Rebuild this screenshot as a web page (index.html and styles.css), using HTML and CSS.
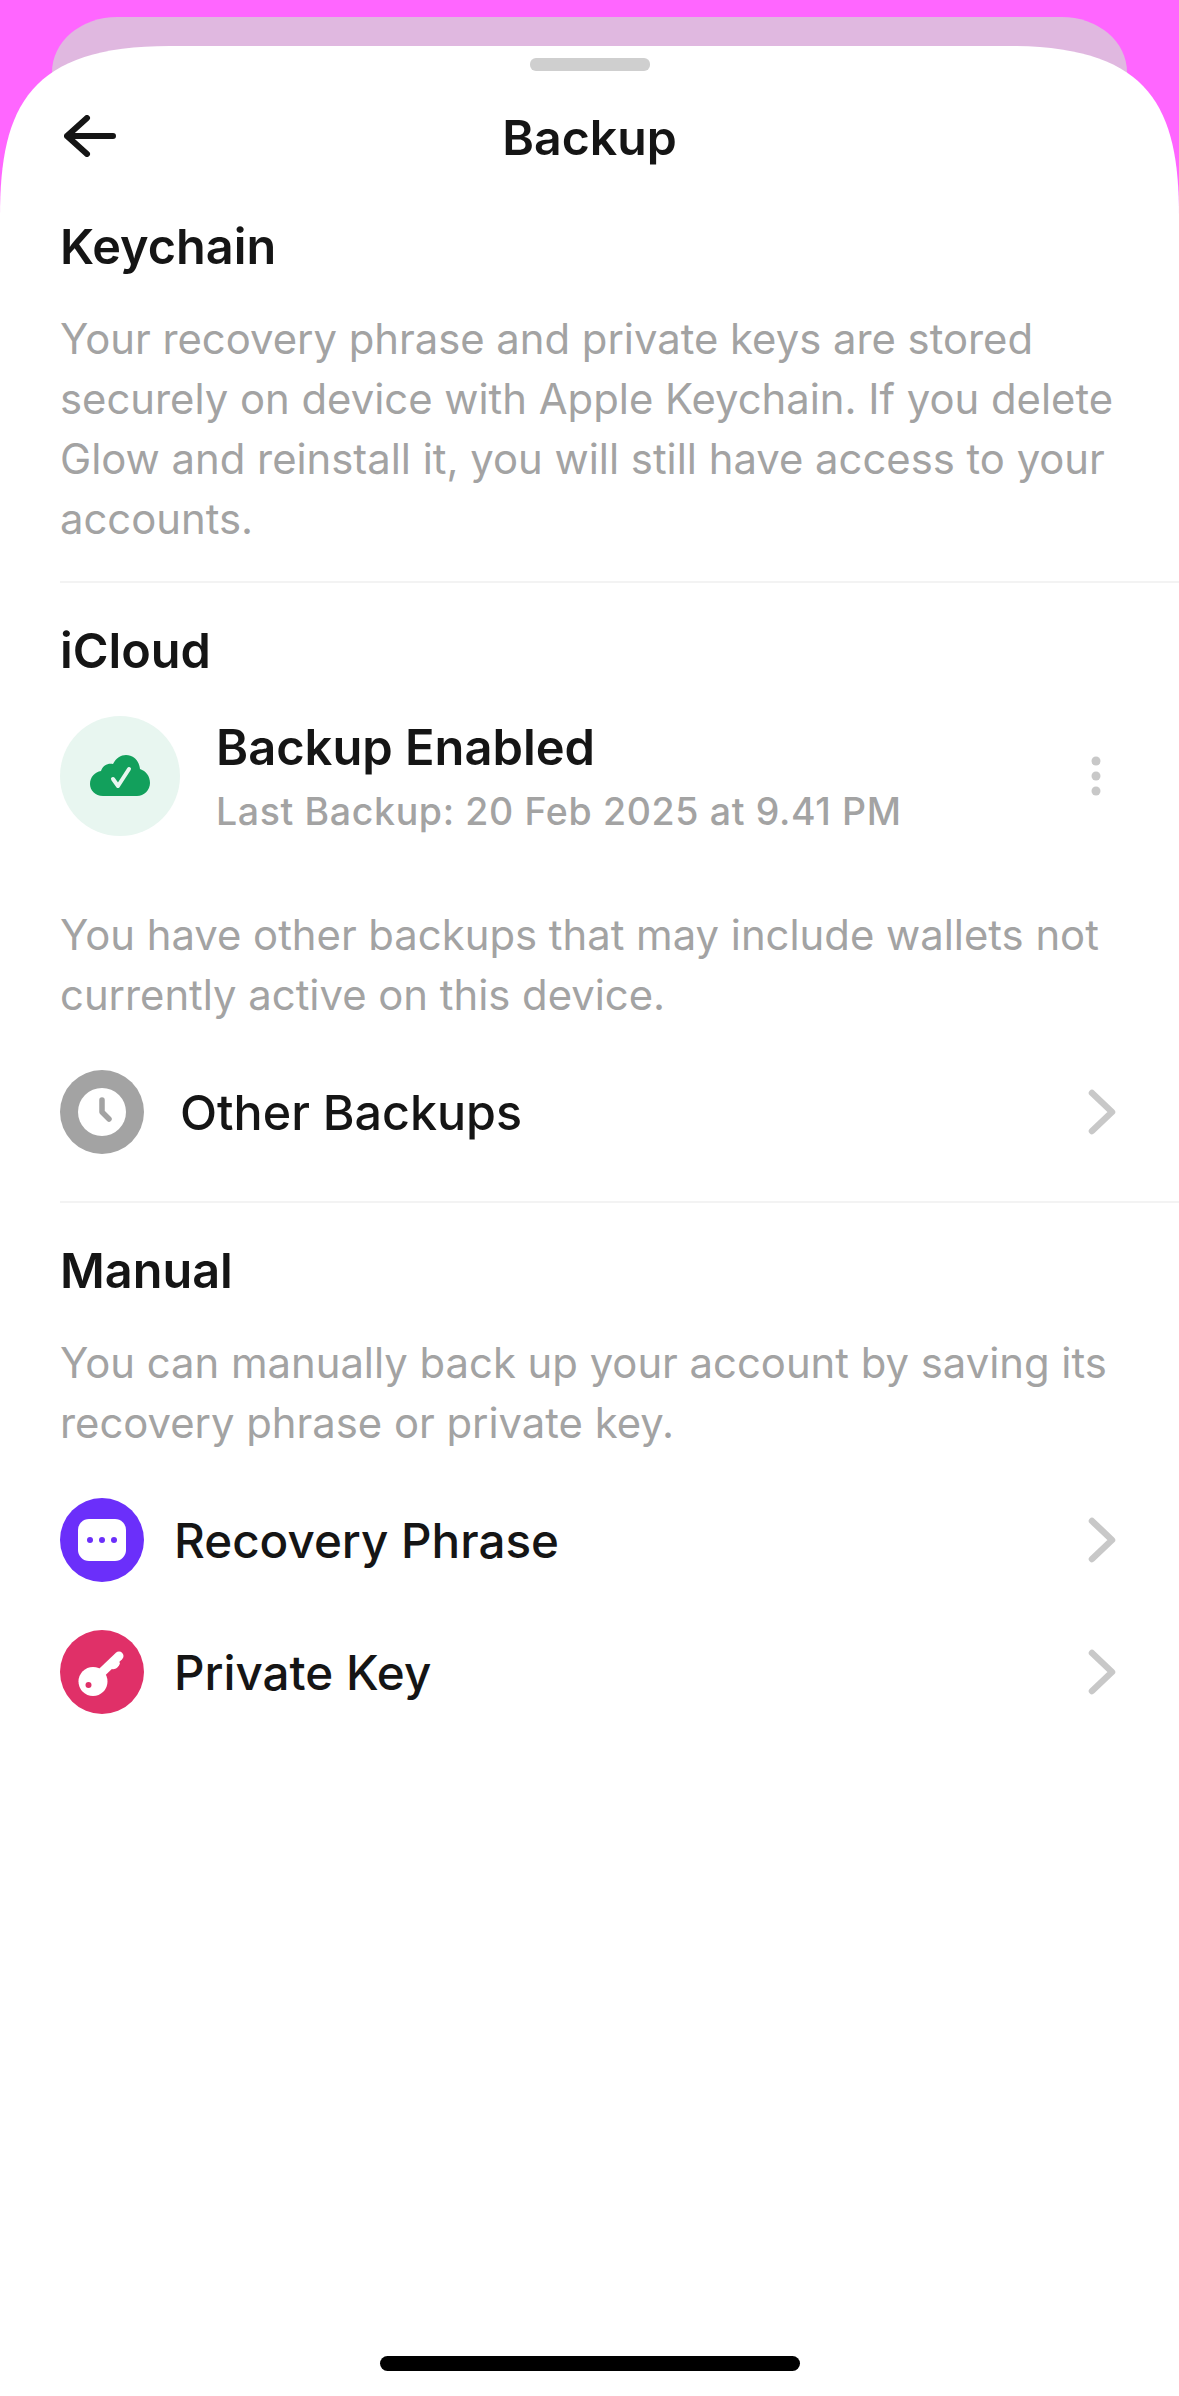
FILE: index.html
```html
<!DOCTYPE html>
<html lang="en">

<head>
    <meta charset="UTF-8">
    <title>Backup</title>
    <link rel="stylesheet" href="styles.css">
</head>

<body>
    <div class="back-card"></div>
    <div class="sheet">
        <div class="grabber"></div>
        <div class="nav">
            <svg class="back" width="52" height="42" viewBox="0 0 52 42">
                <path d="M23 3 L3 21 L23 39 M3 21 H49" fill="none" stroke="#151515" stroke-width="6" stroke-linecap="round" stroke-linejoin="round" />
            </svg>
            <div class="nav-title">Backup</div>
        </div>

        <div class="section keychain">
            <h2>Keychain</h2>
            <p>Your recovery phrase and private keys are stored securely on device with Apple Keychain. If you delete Glow and reinstall it, you will still have access to your accounts.</p>
        </div>

        <div class="section icloud">
            <h2>iCloud</h2>
            <div class="status">
                <div class="status-icon">
                    <svg width="60" height="42" viewBox="0 0 60 42">
                        <path d="M13 41 C5 41 0 35 0 29 C0 22 5 17 11 16 C13 10 18 8 23 9 C26 3 31 0 36 0 C44 0 49 6 50 14 C56 16 60 21 60 28 C60 35 54 41 47 41 Z" fill="#12a05c" />
                        <path d="M23 24 L28 31 L39 14" fill="none" stroke="#e8f6f0" stroke-width="4" stroke-linecap="round" stroke-linejoin="round" />
                    </svg>
                </div>
                <div class="status-text">
                    <div class="status-title">Backup Enabled</div>
                    <div class="status-sub">Last Backup: 20 Feb 2025 at 9.41 PM</div>
                </div>
                <svg class="more" width="10" height="40" viewBox="0 0 10 40">
                    <circle cx="5" cy="5" r="4.5" fill="#c8c8c8" />
                    <circle cx="5" cy="20" r="4.5" fill="#c8c8c8" />
                    <circle cx="5" cy="35" r="4.5" fill="#c8c8c8" />
                </svg>
            </div>
            <p class="other-note">You have other backups that may include wallets not currently active on this device.</p>
            <div class="row row-wide">
                <div class="row-icon grey">
                    <svg width="48" height="48" viewBox="0 0 48 48">
                        <circle cx="24" cy="24" r="24" fill="#fff" />
                        <path d="M24 12 V24 L31 31" fill="none" stroke="#a3a3a3" stroke-width="5.5" stroke-linecap="round" stroke-linejoin="round" />
                    </svg>
                </div>
                <div class="row-label">Other Backups</div>
                <svg class="chevron" width="28" height="46" viewBox="0 0 28 46">
                    <path d="M4 4 L24 23 L4 42" fill="none" stroke="#c8c8c8" stroke-width="6.5" stroke-linecap="round" stroke-linejoin="round" />
                </svg>
            </div>
        </div>

        <div class="section manual">
            <h2>Manual</h2>
            <p>You can manually back up your account by saving its recovery phrase or private key.</p>
            <div class="row row-first">
                <div class="row-icon purple">
                    <svg width="48" height="42" viewBox="0 0 48 42">
                        <rect width="48" height="42" rx="11" fill="#fff" />
                        <circle cx="12" cy="21" r="3" fill="#6b2ffa" />
                        <circle cx="24" cy="21" r="3" fill="#6b2ffa" />
                        <circle cx="36" cy="21" r="3" fill="#6b2ffa" />
                    </svg>
                </div>
                <div class="row-label">Recovery Phrase</div>
                <svg class="chevron" width="28" height="46" viewBox="0 0 28 46">
                    <path d="M4 4 L24 23 L4 42" fill="none" stroke="#c8c8c8" stroke-width="6.5" stroke-linecap="round" stroke-linejoin="round" />
                </svg>
            </div>
            <div class="row">
                <div class="row-icon pink">
                    <svg width="48" height="48" viewBox="0 0 48 48">
                        <circle cx="15" cy="33.5" r="14.5" fill="#fff" />
                        <path d="M20 28 L41 8" fill="none" stroke="#fff" stroke-width="9" stroke-linecap="round" />
                        <path d="M28 16 L34 21 C37 22 41 19 42 15 L38 10 Z" fill="#fff" />
                        <circle cx="10.5" cy="37" r="3" fill="#e03068" />
                    </svg>
                </div>
                <div class="row-label">Private Key</div>
                <svg class="chevron" width="28" height="46" viewBox="0 0 28 46">
                    <path d="M4 4 L24 23 L4 42" fill="none" stroke="#c8c8c8" stroke-width="6.5" stroke-linecap="round" stroke-linejoin="round" />
                </svg>
            </div>
        </div>

        <div class="home-bar"></div>
    </div>
</body>

</html>
```

FILE: styles.css
```css
* {
    margin: 0;
    padding: 0;
    box-sizing: border-box;
}
html, body {
    height: 100%;
}
body {
    background: #ff66ff;
    font-family: Inter, "Noto Sans", sans-serif;
    color: #151515;
    padding-top: 46px;
    overflow: hidden;
}
.back-card {
    position: absolute;
    top: 17px;
    left: 52px;
    right: 52px;
    height: 120px;
    background: #e0b8e0;
    border-radius: 65px 65px 0 0 / 55px 55px 0 0;
}
.sheet {
    position: relative;
    height: 2350px;
    background: #fff;
    clip-path: path("M0 170 C0 60 30 0 170 0 H1009 C1149 0 1179 60 1179 170 V2350 H0 Z");
    display: flex;
    flex-direction: column;
}
.grabber {
    width: 120px;
    height: 13px;
    margin: 12px auto 0;
    background: #cfcfcf;
    border-radius: 6px;
}
.nav {
    position: relative;
    height: 90px;
    margin-top: 21px;
    display: flex;
    align-items: center;
    justify-content: center;
}
.back {
    position: absolute;
    left: 64px;
    top: 23px;
}
.nav-title {
    font-size: 48.2px;
    font-weight: 600;
}
.section {
    margin-left: 60px;
    border-bottom: 2px solid #f3f3f3;
}
.section h2 {
    font-size: 48.6px;
    font-weight: 600;
    line-height: 58px;
}
.section p {
    padding-right: 60px;
    font-size: 41.8px;
    line-height: 60px;
    color: #a3a3a3;
}
.keychain {
    padding-top: 36px;
    padding-bottom: 32px;
}
.keychain h2 {
    margin-bottom: 33px;
}
.icloud {
    padding-top: 39px;
    padding-bottom: 47px;
}
.status {
    display: flex;
    align-items: center;
    margin-top: 36px;
    padding-right: 78px;
}
.status-icon {
    width: 120px;
    height: 120px;
    border-radius: 50%;
    background: #e8f6f0;
    display: flex;
    align-items: center;
    justify-content: center;
}
.status-text {
    flex: 1;
    margin-left: 36px;
}
.status-title {
    font-size: 48.8px;
    font-weight: 600;
    line-height: 60px;
}
.status-sub {
    margin-top: 12px;
    font-size: 37.5px;
    font-weight: 500;
    letter-spacing: 0.63px;
    line-height: 44px;
    color: #a3a3a3;
}
.other-note {
    margin-top: 69px;
}
.row {
    display: flex;
    align-items: center;
    height: 84px;
    margin-top: 48px;
    padding-right: 63px;
}
.row-wide, .row-first {
    margin-top: 45px;
}
.row-icon {
    width: 84px;
    height: 84px;
    border-radius: 50%;
    display: flex;
    align-items: center;
    justify-content: center;
    flex-shrink: 0;
}
.grey { background: #a3a3a3; }
.purple { background: #6b2ffa; }
.pink { background: #e03068; }
.row-label {
    flex: 1;
    margin-left: 30px;
    font-size: 47.6px;
    font-weight: 500;
}
.row-wide .row-label {
    margin-left: 36px;
    font-size: 48.4px;
}
.manual {
    padding-top: 39px;
    border-bottom: none;
}
.manual h2 {
    margin-bottom: 33px;
}
.home-bar {
    position: absolute;
    left: 380px;
    bottom: 25px;
    width: 420px;
    height: 15px;
    border-radius: 8px;
    background: #000;
}
```
